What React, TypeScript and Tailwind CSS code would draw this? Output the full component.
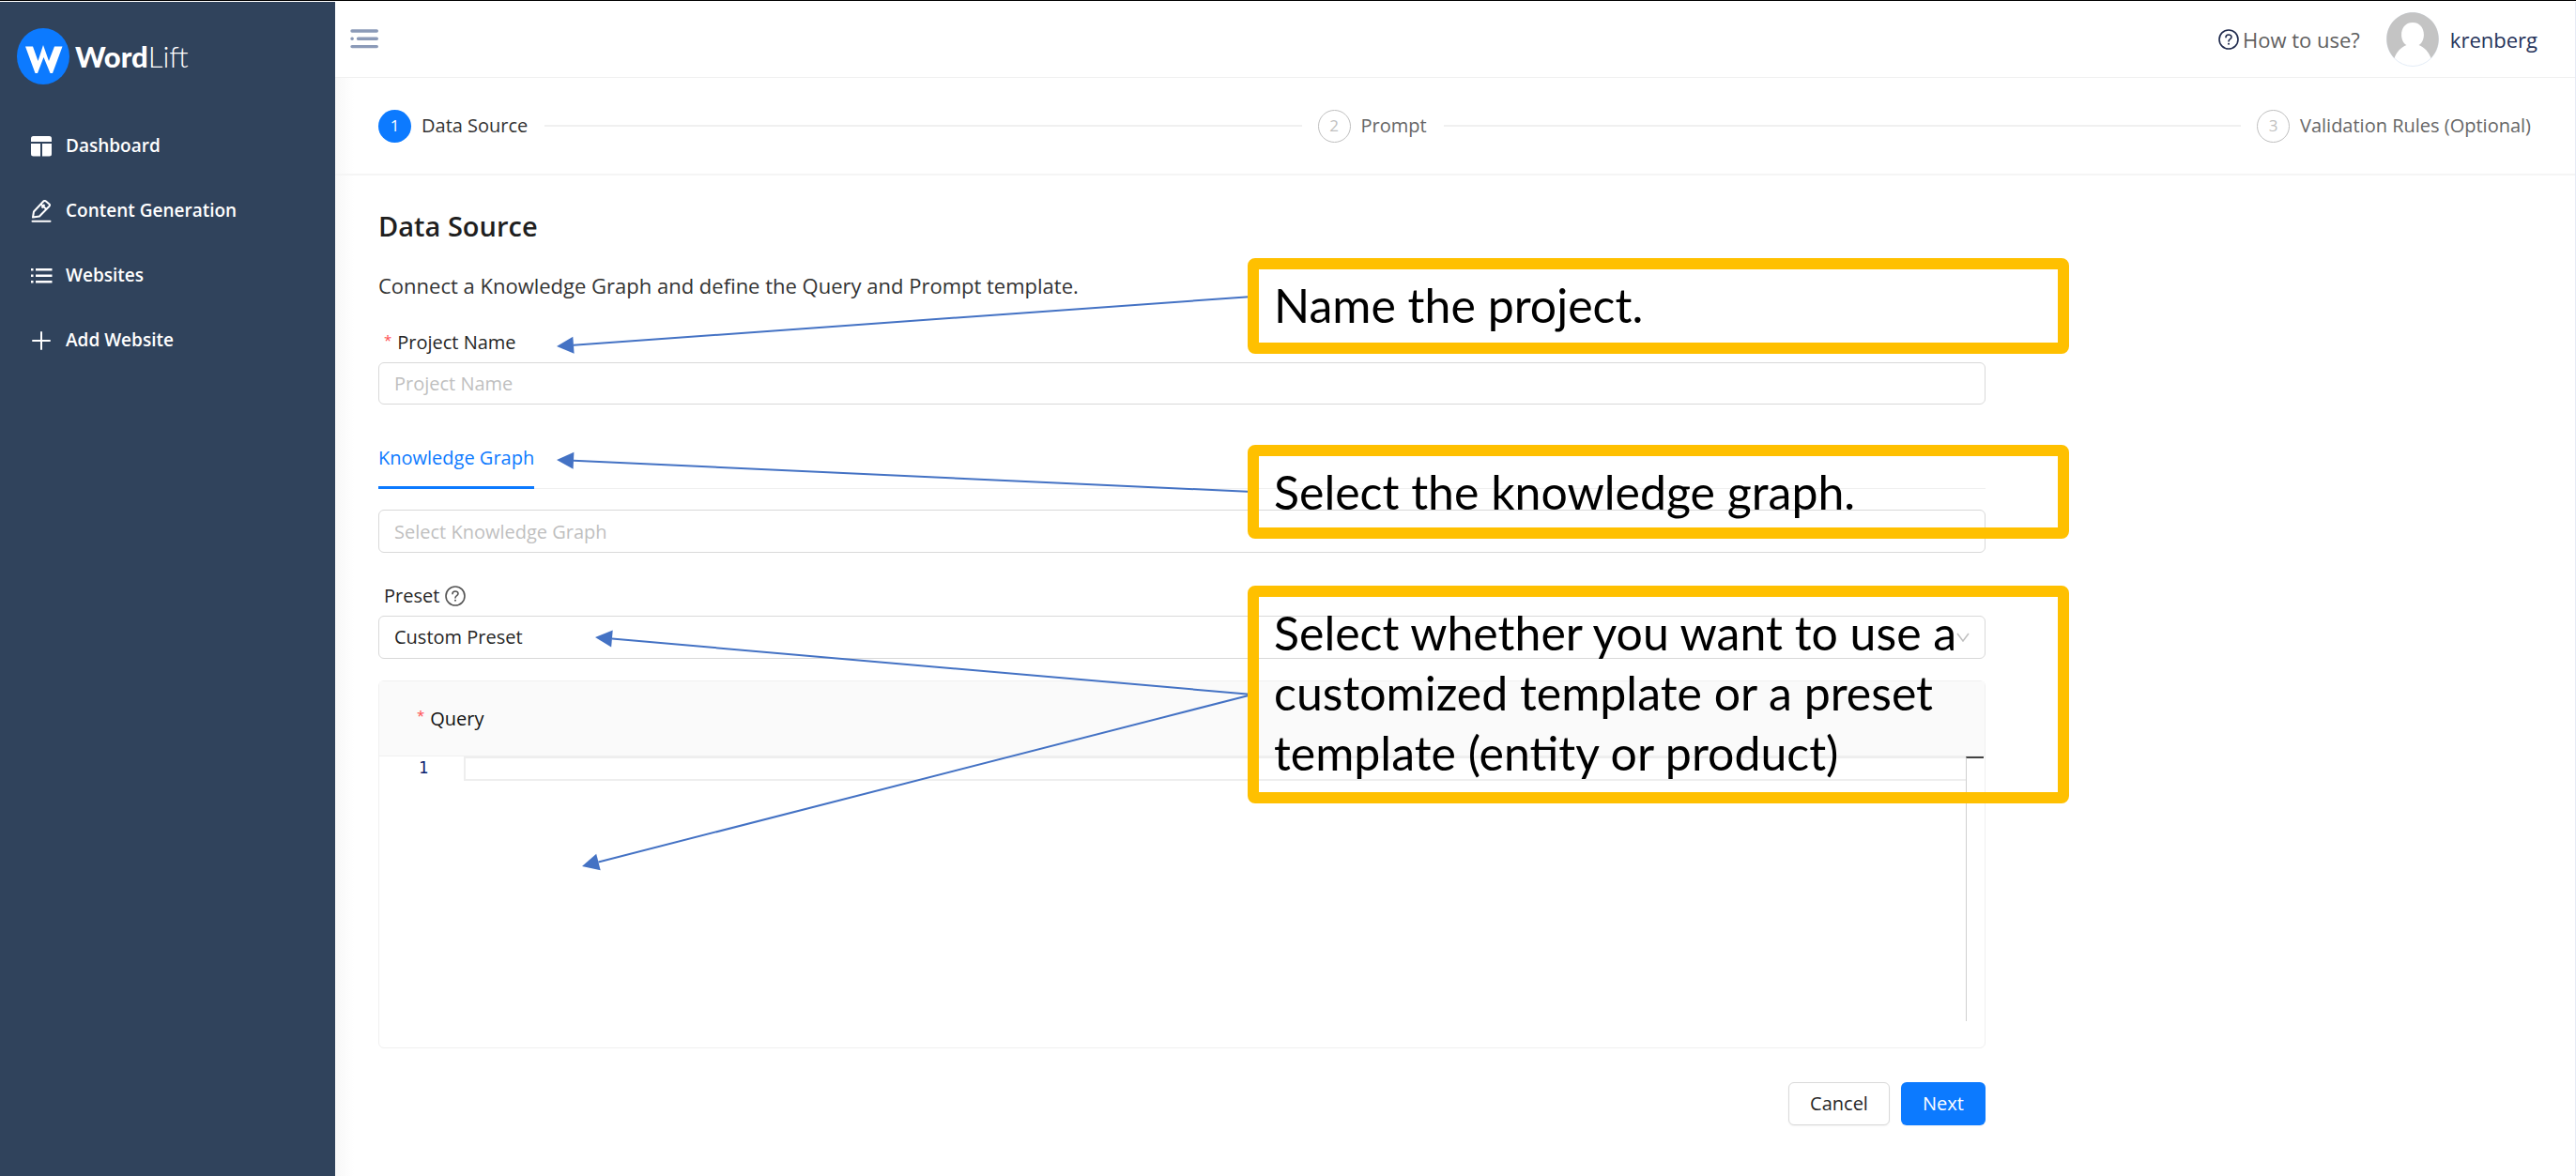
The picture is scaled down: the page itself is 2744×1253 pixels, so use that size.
import React from "react";

const NAV = [
  { label: "Dashboard", icon: <DashboardIcon /> },
  { label: "Content Generation", icon: <EditIcon /> },
  { label: "Websites", icon: <ListIcon /> },
  { label: "Add Website", icon: <PlusIcon /> },
];

function DashboardIcon() {
  return (
    <svg viewBox="0 0 24 24" className="size-6" fill="currentColor" aria-hidden="true">
      <path d="M1 7V3.500Q1 1 3.500 1H20.500Q23 1 23 3.500V7Z" />
      <path d="M1 9H11V22.500H3.500Q1 22.500 1 20Z" />
      <path d="M13 9H23V20Q23 22.500 20.500 22.500H13Z" />
    </svg>
  );
}

function EditIcon() {
  return (
    <svg viewBox="0 0 24 24" className="size-6" fill="none" stroke="currentColor" strokeWidth="2" strokeLinejoin="round" aria-hidden="true">
      <path d="M3 18.500L4 12.500L14.500 1.300Q15.500 0.500 16.700 1.300L20.500 4.500Q21.500 5.500 20.500 6.700L10 17.500Z" />
      <path d="M11.500 4.500L17.500 10M15.500 5L12.500 8.500" />
      <path d="M2.500 22.800H21.500" strokeLinecap="round" />
    </svg>
  );
}

function ListIcon() {
  return (
    <svg viewBox="0 0 24 24" className="size-6" fill="currentColor" aria-hidden="true">
      <path d="M6 4H23.500V6.500H6ZM6 10.500H23.500V13H6ZM6 17H23.500V19.500H6Z" />
      <path d="M1 4H3.500V6.500H1ZM1 10.500H3.500V13H1ZM1 17H3.500V19.500H1Z" />
    </svg>
  );
}

function PlusIcon() {
  return (
    <svg viewBox="0 0 24 24" className="size-6" fill="none" stroke="currentColor" strokeWidth="2" strokeLinecap="round" aria-hidden="true">
      <path d="M12 3V21M3 12H21" />
    </svg>
  );
}

function HelpIcon() {
  return (
    <svg viewBox="0 0 22 22" className="size-[22px]" fill="none" stroke="currentColor" aria-hidden="true">
      <circle cx="11" cy="11" r="10" strokeWidth="1.600" />
      <path d="M8 8.800C8 5.200 14 5.200 14 8.600C14 10.800 11 10.600 11 13" strokeWidth="1.600" strokeLinecap="round" />
      <circle cx="11" cy="15.800" r="1" fill="currentColor" stroke="none" />
    </svg>
  );
}

function Sidebar() {
  return (
    <aside className="w-[357px] shrink-0 bg-[#30435c] text-white">
      <a href="#home" className="flex items-center gap-1.5 pt-7 pl-[18px]">
        <svg viewBox="0 0 56 60" className="h-[60px] w-14" aria-hidden="true">
          <ellipse cx="28" cy="30" rx="28" ry="30" fill="#0c7aff" />
          <path d="M9 19.500H17L22.500 35L28 18L34 35L40 19.500H48.500L38 48H35.500L28.500 31L22 48H19.500Z" fill="#fff" />
        </svg>
        <span className="font-[Lato] text-[31px] leading-9">
          <span className="font-black">Word</span>
          <span className="font-light">Lift</span>
        </span>
      </a>
      <nav className="mt-[31px]">
        {NAV.map((n) => (
          <a key={n.label} href="#nav" className="flex h-[69px] items-center gap-[14px] pl-8 text-[19px] font-semibold">
            {n.icon}
            {n.label}
          </a>
        ))}
      </nav>
    </aside>
  );
}

function Header() {
  return (
    <header className="flex h-[81px] items-center justify-between border-b border-[#f0f0f0] bg-white pr-10 pl-4">
      <button type="button" aria-label="Toggle menu" className="text-[#8b9ab8]">
        <svg viewBox="0 0 30 22" className="h-[22px] w-[30px]" stroke="currentColor" strokeWidth="3.400" strokeLinecap="round" aria-hidden="true">
          <path d="M2 2H28.300M2 10.300H2.200M8.500 10.300H28.300M2 18.600H28.300" />
        </svg>
      </button>
      <div className="flex items-center text-[22px] leading-7">
        <a href="#help" className="flex items-center gap-1 text-[#5f5f5f]">
          <span className="text-[#1f2a4d]"><HelpIcon /></span>
          How to use?
        </a>
        <svg viewBox="0 0 56 58" className="ml-7 h-[58px] w-14" aria-hidden="true">
          <ellipse cx="28" cy="29" rx="27.500" ry="28.500" fill="#fff" stroke="#e3ecf7" />
          <path d="M8.500 49C-3 37 -2 18 9 8C20 -2.500 36 -2.500 47 8C58 18 59 37 47.500 49C45 42 40.500 37.500 34.500 35C43 30 42 11 28 11C14 11 13 30 21.500 35C15.500 37.500 11 42 8.500 49Z" fill="#c4c4c4" />
        </svg>
        <span className="ml-3 text-[#26335a]">krenberg</span>
      </div>
    </header>
  );
}

function Steps() {
  const line = <span className="ml-[18px] h-0.5 flex-1 bg-[#f0f0f0]" />;
  const todo = "flex size-[35px] items-center justify-center rounded-full border border-[#bfbfbf] text-[17px] text-[#bfbfbf]";
  return (
    <ol className="flex h-[104px] items-center gap-[17px] border-b-2 border-[#f5f5f5] pr-[47px] pl-[46px] text-[20px] text-[#666]">
      <li className="flex flex-1 items-center">
        <span className="mr-[11px] flex size-[35px] items-center justify-center rounded-full bg-[#0c7aff] text-[17px] text-white">1</span>
        <span className="text-[#333]">Data Source</span>
        {line}
      </li>
      <li className="flex flex-1 items-center">
        <span className={todo}>2</span>
        <span className="ml-[11px]">Prompt</span>
        {line}
      </li>
      <li className="flex items-center">
        <span className={todo}>3</span>
        <span className="ml-[11px]">Validation Rules (Optional)</span>
      </li>
    </ol>
  );
}

function Star() {
  return <span className="mr-1.5 -mt-1.5 text-[15px] text-[#ff4d4f]">*</span>;
}

function Arrow({ x1, y1, x2, y2 }: { x1: number; y1: number; x2: number; y2: number }) {
  const len = Math.hypot(x2 - x1, y2 - y1);
  const ux = (x2 - x1) / len;
  const uy = (y2 - y1) / len;
  const bx = x2 - ux * 18;
  const by = y2 - uy * 18;
  return (
    <g>
      <line x1={x1} y1={y1} x2={bx} y2={by} stroke="#4472c4" strokeWidth="2" />
      <polygon
        fill="#4472c4"
        points={`${x2},${y2} ${bx - uy * 9},${by + ux * 9} ${bx + uy * 9},${by - ux * 9}`}
      />
    </g>
  );
}

function Annotations() {
  const box = "absolute left-[926px] w-[875px] rounded-lg border-[12px] border-[#ffc000] pl-4 font-[Lato] text-[50px] leading-[64px] text-black";
  return (
    <div className="pointer-events-none absolute inset-0">
      <svg className="absolute top-0 left-0 h-full w-full overflow-visible" aria-hidden="true">
        <Arrow x1={931} y1={129} x2={190} y2={182} />
        <Arrow x1={931} y1={337} x2={190} y2={303} />
        <Arrow x1={931} y1={553} x2={231} y2={492} />
        <Arrow x1={931} y1={553} x2={217} y2={736} />
      </svg>
      <p className={`${box} top-[88px] h-[102px] pt-1.5`}>Name the project.</p>
      <p className={`${box} top-[287px] h-[100px] pt-1.5`}>Select the knowledge graph.</p>
      <p className={`${box} top-[437px] h-[232px] pt-1.5 whitespace-nowrap`}>
        Select whether you want to use a<br />customized template or a preset<br />template (entity or product)
      </p>
    </div>
  );
}

function DataSourceForm() {
  return (
    <form className="relative ml-[46px] w-full max-w-[1712px] text-[20px] text-[#262626]">
      <h1 className="pt-[34px] text-[29px] leading-10 font-semibold text-[#1f1f1f]">Data Source</h1>
      <p className="mt-7 text-[22px] leading-[30px] text-[#333]">
        Connect a Knowledge Graph and define the Query and Prompt template.
      </p>
      <label htmlFor="project" className="mt-[31px] flex h-[30px] items-center pl-1.5"><Star />Project Name</label>
      <input id="project" placeholder="Project Name" className="mt-[6px] h-[45px] w-full rounded-md border border-[#d9d9d9] bg-white px-4 placeholder:text-[#bfbfbf]" />

      <div role="tablist" className="mt-[39px] flex h-[51px] border-b border-[#f0f0f0]">
        <button type="button" role="tab" aria-selected="true" className="h-[51px] border-b-[3px] border-[#0c7aff] pb-3 text-[#0c7aff]">
          Knowledge Graph
        </button>
      </div>
      <input aria-label="Knowledge Graph" placeholder="Select Knowledge Graph" className="mt-[22px] h-[46px] w-full rounded-md border border-[#d9d9d9] bg-white px-4 placeholder:text-[#bfbfbf]" />

      <label htmlFor="preset" className="mt-[31px] flex h-[30px] items-center gap-1.5 pl-1.5">
        Preset <span className="text-[#555]"><HelpIcon /></span>
      </label>
      <div className="relative mt-[6px]">
        <select id="preset" className="h-[46px] w-full appearance-none rounded-md border border-[#d9d9d9] bg-white px-4">
          <option>Custom Preset</option>
        </select>
        <svg viewBox="0 0 14 10" className="absolute top-[18px] right-[17px] h-2.5 w-3.5" fill="none" stroke="#bfbfbf" strokeWidth="1.500" aria-hidden="true">
          <path d="M1 1L7 9L13 1" />
        </svg>
      </div>

      <section className="mt-[23px] rounded-md border border-[#f0f0f0] bg-white">
        <div className="flex h-20 items-center border-b border-[#f0f0f0] bg-[#fafafa] pl-10">
          <label htmlFor="query" className="flex items-center text-[#111]"><Star />Query</label>
        </div>
        <div className="flex h-[310px]">
          <span className="w-[90px] pl-[42px] font-[DejaVu_Sans_Mono] text-[17px] leading-[25px] text-[#0b216f]">1</span>
          <textarea id="query" rows={1} className="h-[26px] flex-1 resize-none overflow-hidden border-2 border-r-0 border-[#eee]" />
          <div className="mr-px h-[282px] w-[19px] border-t-2 border-l border-t-[#424242] border-l-[#d0d0d0]" />
        </div>
      </section>

      <div className="mt-9 flex justify-end gap-3">
        <button type="button" className="h-[46px] w-[108px] rounded-md border border-[#d9d9d9] bg-white shadow-xs">Cancel</button>
        <button type="submit" className="h-[46px] w-[90px] rounded-md bg-[#0c7aff] text-white shadow-xs">Next</button>
      </div>
      <Annotations />
    </form>
  );
}

export default function App() {
  return (
    <div className="flex min-h-screen flex-col border-t border-black bg-white pt-px font-['Open_Sans',sans-serif]">
      <div className="flex grow">
        <Sidebar />
        <main className="min-w-0 flex-1 border-r border-[#e6eaf5] bg-linear-to-r from-[#f8f8f8] to-white to-[20px]">
          <Header />
          <Steps />
          <DataSourceForm />
        </main>
      </div>
    </div>
  );
}
